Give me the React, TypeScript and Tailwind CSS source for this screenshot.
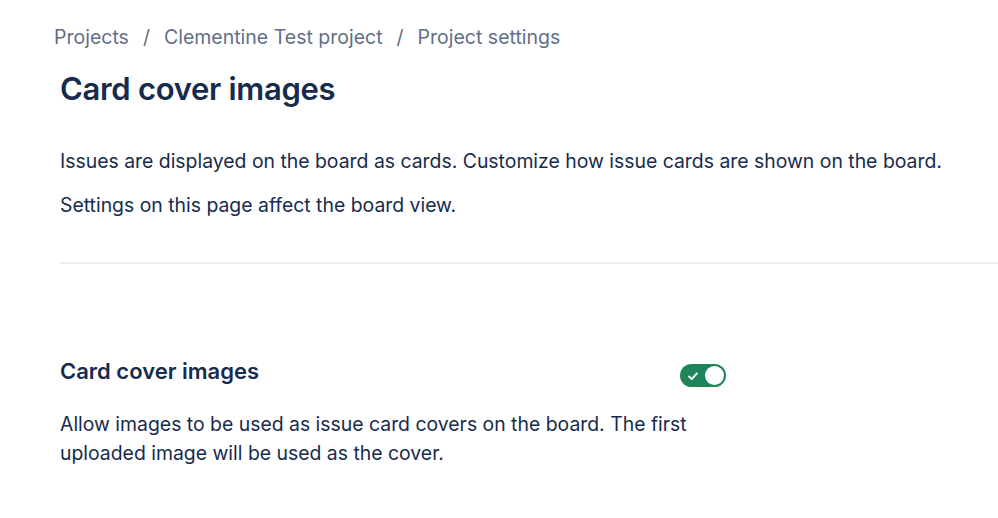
import React, { useState } from 'react';

const Toggle = ({ checked, onChange }: { checked: boolean; onChange: () => void }) => (
  <button
    onClick={onChange}
    className={`relative flex items-center w-[46px] h-[23px] rounded-full px-[3px] ${checked ? 'bg-[#1f845a]' : 'bg-[#8590a2]'}`}
  >
    <svg viewBox="0 0 16 16" className="w-[14px] h-[14px] ml-[3px]" fill="none" stroke="white" strokeWidth={2.2} strokeLinecap="round" strokeLinejoin="round">
      <path d="M3.5 8.5l3 3 6-6.5" />
    </svg>
    <span className={`absolute top-[2px] w-[19px] h-[19px] rounded-full bg-white ${checked ? 'right-[2px]' : 'left-[2px]'}`} />
  </button>
);

export default function App() {
  const [coversOn, setCoversOn] = useState(true);

  return (
    <div className="min-h-screen bg-white text-[#172b4d]" style={{ fontFamily: 'Inter, "Noto Sans", sans-serif' }}>
      <div className="pl-[54px] pt-[23px]">
        {/* Breadcrumbs */}
        <nav className="flex items-center text-[19.5px] text-[#626f86] leading-[28px]">
          <span>Projects</span>
          <span className="mx-[14px]">/</span>
          <span>Clementine Test project</span>
          <span className="mx-[14px]">/</span>
          <span>Project settings</span>
        </nav>

        <div className="pl-[6px]">
          <h1 className="mt-[18px] text-[31px] font-semibold leading-[40px] tracking-[-0.3px]">Card cover images</h1>

          <p className="mt-[38px] text-[19.4px] leading-[28px]">
            Issues are displayed on the board as cards. Customize how issue cards are shown on the board.
          </p>
          <p className="mt-[16px] text-[19.4px] leading-[28px]">Settings on this page affect the board view.</p>

          <div className="mt-[43px] border-t-2 border-[#ebecf0]" />

          {/* Setting row */}
          <div className="mt-[91px] w-[666px]">
            <div className="flex items-center justify-between">
              <h2 className="text-[22px] font-semibold leading-[30px]">Card cover images</h2>
              <div className="mt-[9px]">
                <Toggle checked={coversOn} onChange={() => setCoversOn(!coversOn)} />
              </div>
            </div>
            <p className="mt-[23px] text-[19.4px] leading-[29px] w-[640px]">
              Allow images to be used as issue card covers on the board. The first uploaded image will be used as the cover.
            </p>
          </div>
        </div>
      </div>
    </div>
  );
}
